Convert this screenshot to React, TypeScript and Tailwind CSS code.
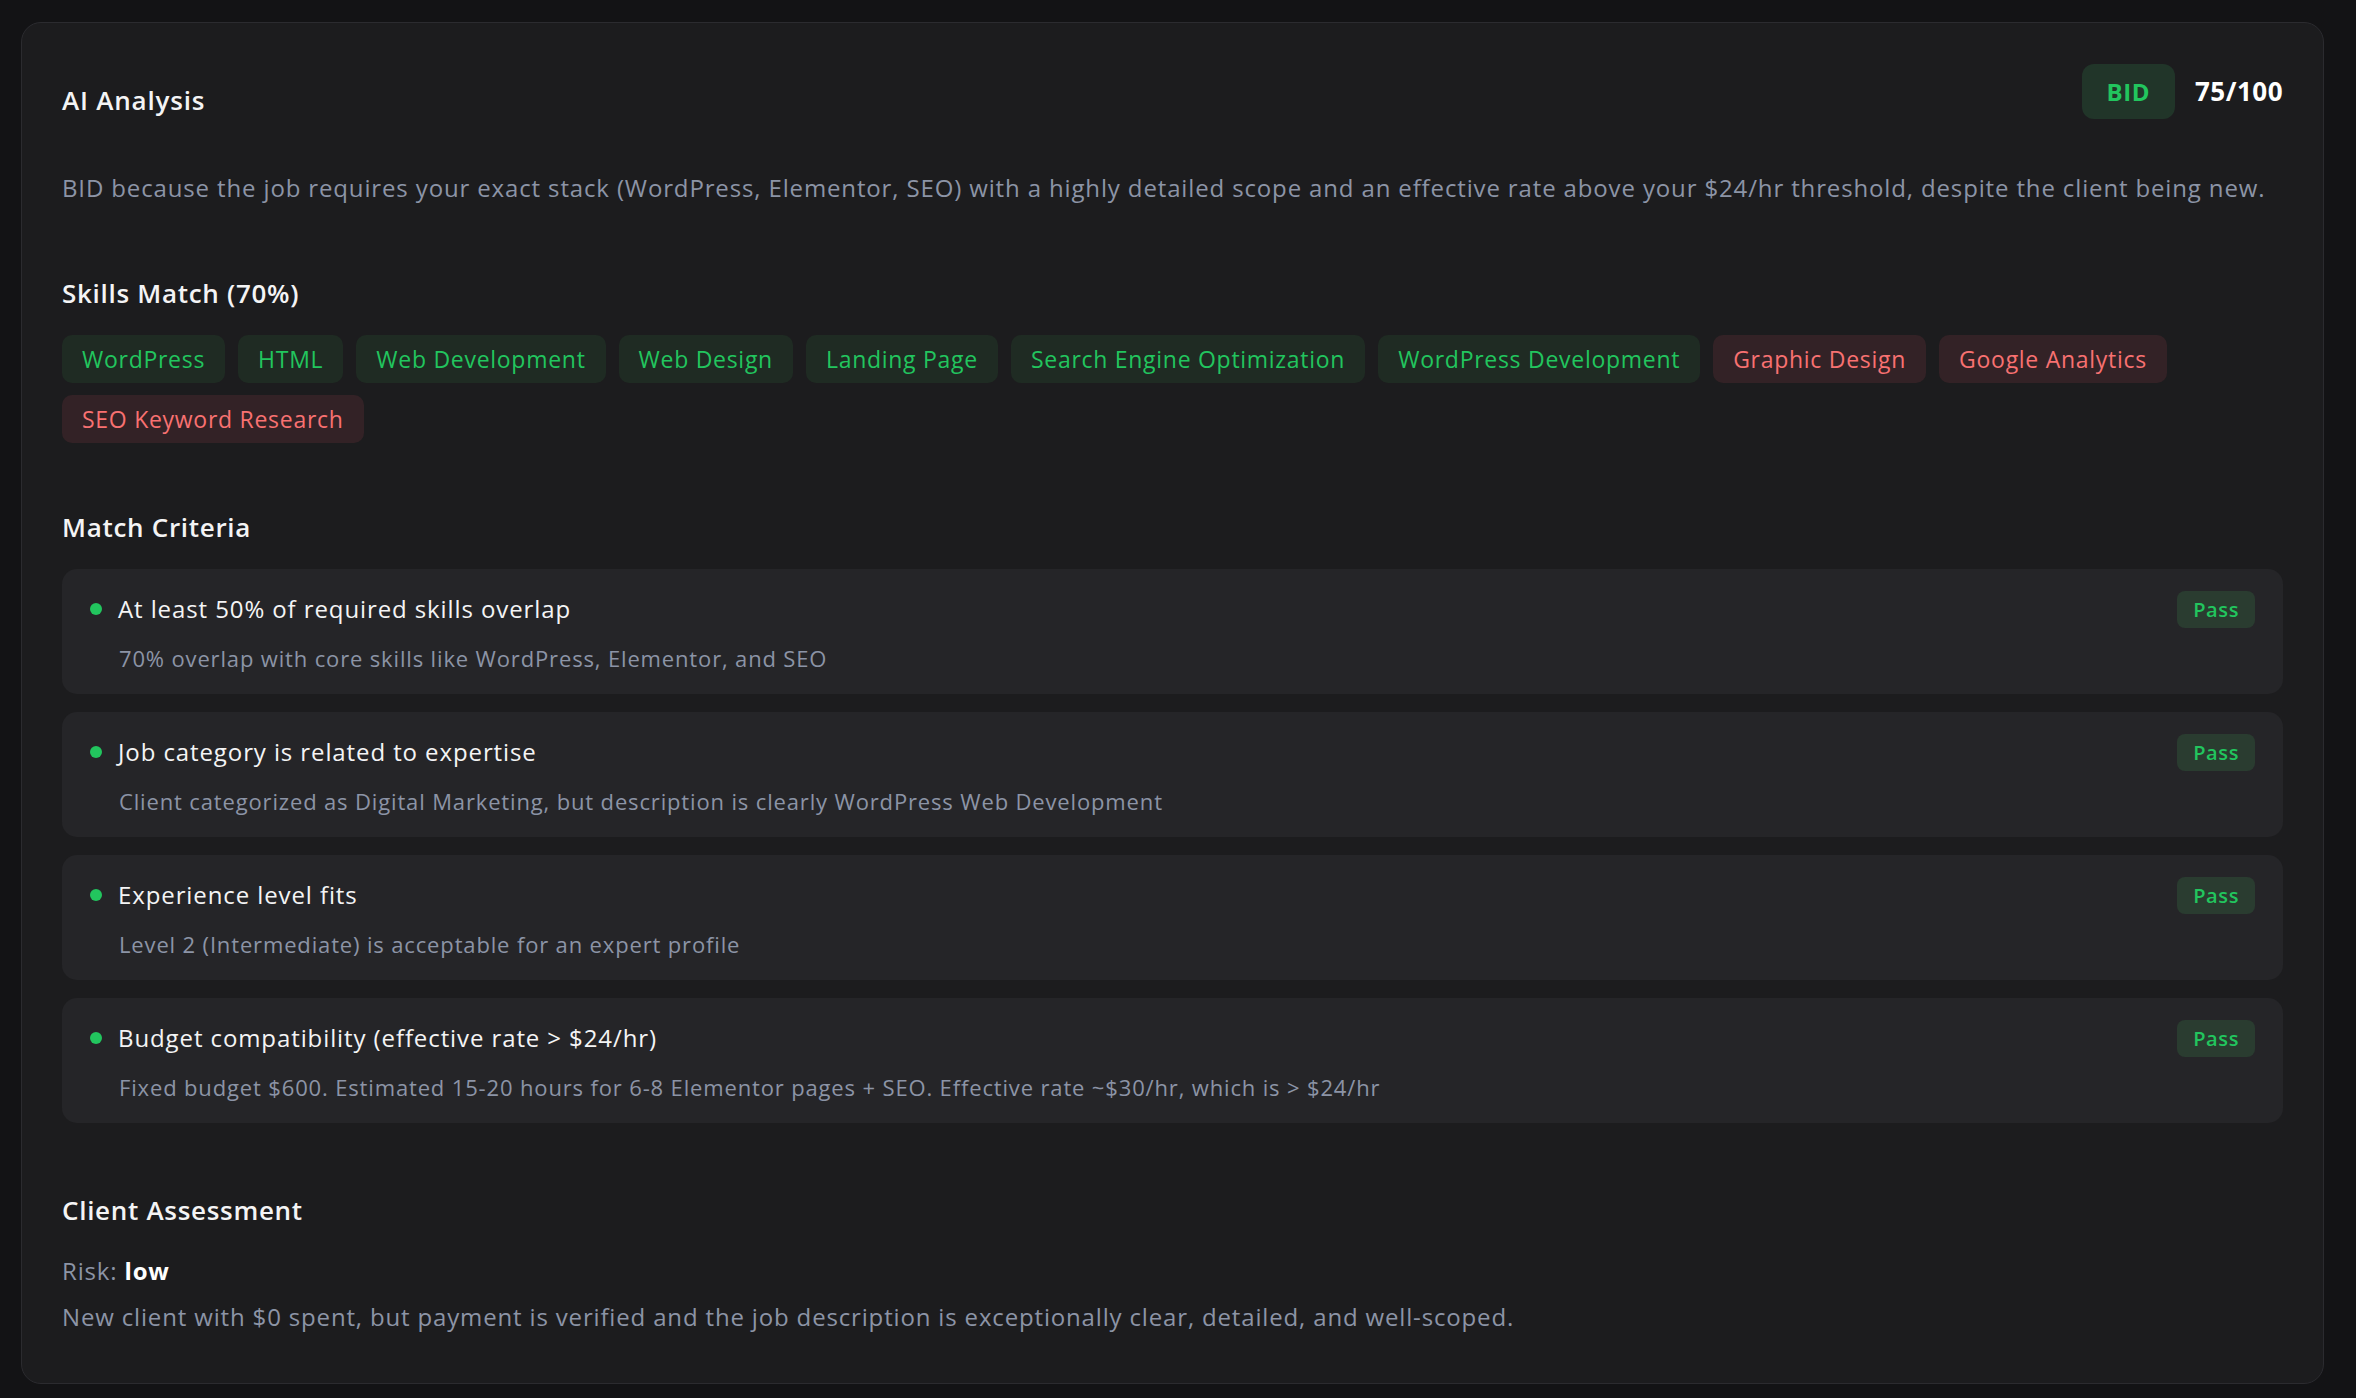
import React from 'react'

const FONT = { fontFamily: '"Open Sans", "Noto Sans", sans-serif' }

type Skill = { name: string; match: boolean }

const SKILLS: Skill[] = [
  { name: 'WordPress', match: true },
  { name: 'HTML', match: true },
  { name: 'Web Development', match: true },
  { name: 'Web Design', match: true },
  { name: 'Landing Page', match: true },
  { name: 'Search Engine Optimization', match: true },
  { name: 'WordPress Development', match: true },
  { name: 'Graphic Design', match: false },
  { name: 'Google Analytics', match: false },
  { name: 'SEO Keyword Research', match: false },
]

const CRITERIA = [
  {
    title: 'At least 50% of required skills overlap',
    detail: '70% overlap with core skills like WordPress, Elementor, and SEO',
  },
  {
    title: 'Job category is related to expertise',
    detail: 'Client categorized as Digital Marketing, but description is clearly WordPress Web Development',
  },
  {
    title: 'Experience level fits',
    detail: 'Level 2 (Intermediate) is acceptable for an expert profile',
  },
  {
    title: 'Budget compatibility (effective rate > $24/hr)',
    detail: 'Fixed budget $600. Estimated 15-20 hours for 6-8 Elementor pages + SEO. Effective rate ~$30/hr, which is > $24/hr',
  },
]

function SectionTitle({ children, className = '' }: { children: React.ReactNode; className?: string }) {
  return <h3 className={`text-[26px] leading-[36px] font-semibold tracking-[0.7px] text-[#f4f4f5] ${className}`}>{children}</h3>
}

export default function App() {
  return (
    <div className="min-h-screen bg-[#131315] pt-[22px] pl-[21px]" style={FONT}>
      <div className="w-[2303px] rounded-[20px] border border-[#2b2b2f] bg-[#1c1c1e] px-[40px] pt-[41px] pb-[48px]">

        {/* Header */}
        <div className="flex items-start justify-between">
          <h2 className="mt-[18px] text-[26px] leading-[36px] font-semibold tracking-[0.8px] text-[#f4f4f5]">AI Analysis</h2>
          <div className="flex items-center gap-[20px]">
            <span className="flex h-[55px] items-center rounded-[12px] bg-[#213529] px-[25px] text-[24px] font-bold tracking-[0.5px] text-[#22c55e]">
              BID
            </span>
            <span className="text-[26px] font-bold tracking-[0.5px] text-white">75/100</span>
          </div>
        </div>

        <p className="mt-[51px] text-[24px] leading-[36px] tracking-[0.86px] text-[#8c94a6]">
          BID because the job requires your exact stack (WordPress, Elementor, SEO) with a highly detailed scope and an effective rate above your $24/hr threshold, despite the client being new.
        </p>

        {/* Skills */}
        <SectionTitle className="mt-[69px]">Skills Match (70%)</SectionTitle>
        <div className="mt-[24px] flex flex-wrap gap-x-[13px] gap-y-[12px]">
          {SKILLS.map(s => (
            <span key={s.name}
              className={`rounded-[10px] px-[20px] py-[6px] text-[23px] leading-[36px] tracking-[0.72px] ${
                s.match ? 'bg-[#1f2b23] text-[#22c55e]' : 'bg-[#332226] text-[#f87171]'
              }`}
            >
              {s.name}
            </span>
          ))}
        </div>

        {/* Criteria */}
        <SectionTitle className="mt-[66px]">Match Criteria</SectionTitle>
        <div className="mt-[24px] flex flex-col gap-[18px]">
          {CRITERIA.map(c => (
            <div key={c.title} className="flex items-start justify-between rounded-[15px] bg-[#252528] pl-[28px] pr-[28px] pt-[22px] pb-[19px]">
              <div>
                <div className="flex items-center gap-[16px]">
                  <span className="h-[12px] w-[12px] flex-none rounded-full bg-[#22c55e]" />
                  <span className="text-[24px] leading-[36px] font-medium tracking-[0.9px] text-[#f4f4f5]">{c.title}</span>
                </div>
                <p className="mt-[15px] pl-[29px] text-[22px] leading-[33px] tracking-[0.85px] text-[#8c94a6]">{c.detail}</p>
              </div>
              <span className="flex h-[37px] items-center rounded-[8px] bg-[#2a3c30] px-[16px] text-[20px] font-semibold tracking-[0.6px] text-[#22c55e]">
                Pass
              </span>
            </div>
          ))}
        </div>

        {/* Client */}
        <SectionTitle className="mt-[69px]">Client Assessment</SectionTitle>
        <p className="mt-[25px] text-[24px] leading-[36px] tracking-[0.84px] text-[#8c94a6]">
          Risk: <span className="font-bold text-white">low</span>
        </p>
        <p className="mt-[10px] text-[24px] leading-[36px] tracking-[0.84px] text-[#8c94a6]">
          New client with $0 spent, but payment is verified and the job description is exceptionally clear, detailed, and well-scoped.
        </p>
      </div>
    </div>
  )
}
